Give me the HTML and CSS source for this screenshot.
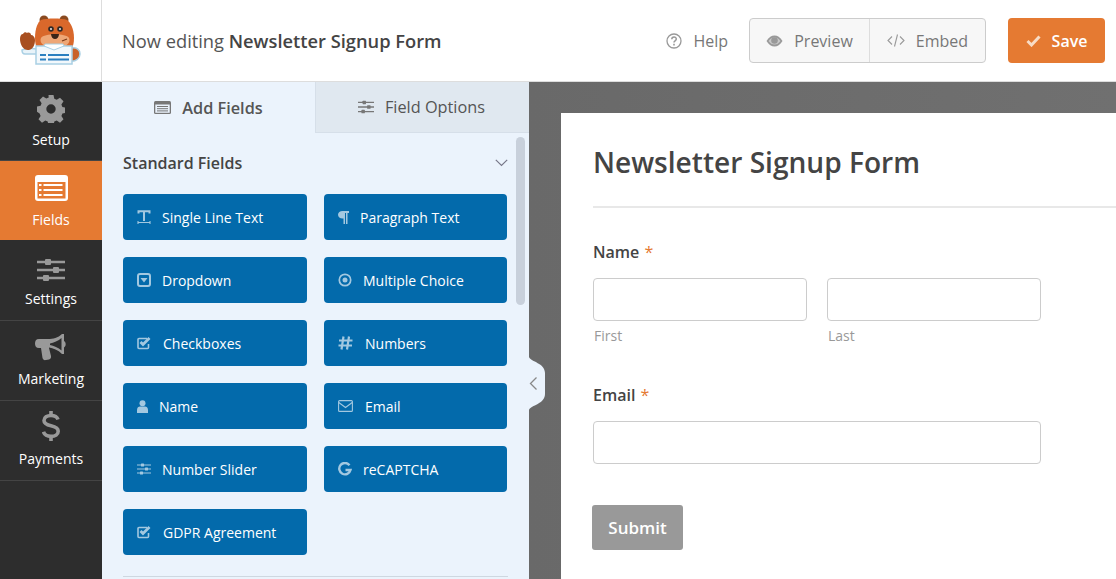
FILE: index.html
```html
<!DOCTYPE html>
<html lang="en">
<head>
    <meta charset="UTF-8">
    <meta name="viewport" content="width=device-width, initial-scale=1.0">
    <title>Newsletter Signup Form</title>
    <link rel="stylesheet" href="styles.css">
</head>
<body>
    <svg class="icon-defs" width="0" height="0">
        <symbol id="i-sliders" viewBox="0 0 28 24">
            <path d="M0 4h28M0 12h28M0 20h28" stroke="currentColor" stroke-width="2.4" fill="none"/>
            <rect x="8" y="1" width="6" height="6" rx="1" fill="currentColor"/>
            <rect x="16" y="9" width="6" height="6" rx="1" fill="currentColor"/>
            <rect x="6" y="17" width="6" height="6" rx="1" fill="currentColor"/>
        </symbol>
        <symbol id="i-check" viewBox="0 0 14 14">
            <path d="M11.500 8v3.500a1 1 0 0 1-1 1H2a1 1 0 0 1-1-1v-8a1 1 0 0 1 1-1h8" stroke="currentColor" stroke-width="1.600" fill="none"/>
            <path d="M3.500 6l2.500 2.500L12.500 2" stroke="currentColor" stroke-width="2.800" fill="none"/>
        </symbol>
    </svg>

    <header class="topbar">
        <div class="logo">
            <svg width="62" height="52" viewBox="0 0 62 52">
                <path d="M52 33c6-1 9 2 9 6s-4 8-10 7z" fill="#c9622a" stroke="#a9d0e4" stroke-width="1.500"/>
                <path d="M3 35c0 3 1 4 3 4h12v-5l-10-1z" fill="#e8f3f9" stroke="#a9d0e4" stroke-width="1.500"/>
                <path d="M1 24c0-3 1-5 3-5 1-2 3-2 4-1 2-1 4 0 4 2 2 0 4 2 4 5 0 5-2 9-6 10-5 1-9-5-9-11z" fill="#a84f20"/>
                <circle cx="25" cy="5" r="4.500" fill="#8a4a20"/>
                <circle cx="45" cy="5" r="4.500" fill="#8a4a20"/>
                <path d="M22 5c5-2 21-2 26 0 3 2 7 8 7 18 0 5-1 8-2 10H18c-1-2-2-5-2-10 0-10 3-16 6-18z" fill="#d9682b"/>
                <path d="M22 23c3-5 25-5 28 0 2 4-2 10-14 10s-16-6-14-10z" fill="#eea777"/>
                <circle cx="32" cy="14" r="2.800" fill="#2e2a28"/>
                <circle cx="41" cy="14" r="2.800" fill="#2e2a28"/>
                <circle cx="32" cy="14" r=".9" fill="#fff"/>
                <circle cx="41" cy="14" r=".9" fill="#fff"/>
                <path d="M32 19h8c0 3-2 5-4 5s-4-2-4-5z" fill="#3a2418"/>
                <path d="M43 26l5-2" stroke="#7a3a18" stroke-width="1.200"/>
                <path d="M17 31h36v18H17z" fill="#f2f8fc" stroke="#a9d0e4" stroke-width="1.500"/>
                <path d="M25 31l10 4 10-4-1-2H26z" fill="#fff" stroke="#a9d0e4"/>
                <path d="M21 40h6M29 40h21M21 44.500h6M29 44.500h21" stroke="#2a7fc0" stroke-width="2"/>
            </svg>
        </div>
        <div class="editing">Now editing <strong>Newsletter Signup Form</strong></div>
        <a class="help">
            <svg width="16" height="16" viewBox="0 0 16 16" fill="none" stroke="#999">
                <circle cx="8" cy="8" r="7" stroke-width="1.300"/>
                <path d="M5.800 6.300c0-3 4.500-3 4.500-.2 0 1.800-2.300 1.800-2.300 3.400" stroke-width="1.500"/>
                <path d="M8 10.700v1.800" stroke-width="1.600"/>
            </svg>
            Help
        </a>
        <div class="btn-group">
            <button class="group-btn">
                <svg width="17" height="12" viewBox="0 0 17 12">
                    <path d="M0.500 6C3 2 5.500 0.500 8.500 0.500S14 2 16.500 6C14 10 11.500 11.500 8.500 11.500S3 10 0.500 6z" fill="#999"/>
                    <path d="M2.500 6c1.800-2.500 3.500-3.500 6-3.500s4.200 1 6 3.500c-1.800 2.500-3.500 3.500-6 3.500s-4.200-1-6-3.500z" fill="#f7f7f7" opacity=".5"/>
                    <circle cx="8.500" cy="5.500" r="3.300" fill="#999"/>
                </svg>
                Preview
            </button>
            <button class="group-btn">
                <svg width="18" height="13" viewBox="0 0 18 13" fill="none" stroke="#999" stroke-width="1.100">
                    <path d="M5 2.500L1 6.500l4 4M13 2.500l4 4-4 4M10.500 0.500l-3 12"/>
                </svg>
                Embed
            </button>
        </div>
        <button class="save-btn">
            <svg width="15" height="12" viewBox="0 0 15 12" fill="none" stroke="#f8dcc6" stroke-width="3">
                <path d="M1.500 6l4 4 8-8.500"/>
            </svg>
            Save
        </button>
    </header>

    <div class="builder">
        <nav class="sidebar">
            <a class="nav-item">
                <svg width="28" height="28" viewBox="0 0 28 28">
                    <path fill="#999" fill-rule="evenodd" d="M11.500 0h5l.8 3.800 2.400 1 3.300-2.100 3.500 3.500-2.100 3.300 1 2.400 3.800.8v5l-3.800.8-1 2.400 2.100 3.300-3.500 3.500-3.300-2.100-2.400 1-.8 3.800h-5l-.8-3.800-2.400-1-3.300 2.100-3.500-3.500 2.100-3.300-1-2.400L-.2 16.500v-5l3.800-.8 1-2.400-2.100-3.300 3.500-3.500 3.300 2.100 2.400-1zM14 9.300a4.700 4.700 0 1 0 0 9.400 4.700 4.700 0 0 0 0-9.400z"/>
                </svg>
                <span>Setup</span>
            </a>
            <a class="nav-item active">
                <svg width="33" height="26" viewBox="0 0 33 26">
                    <rect x="0" y="0" width="33" height="26" rx="3" fill="#fff"/>
                    <rect x="2.500" y="7" width="28" height="16.500" fill="#e57a32"/>
                    <path d="M8.500 10h19M8.500 15h19M8.500 20h19M4 10h2.500M4 15h2.500M4 20h2.500" stroke="#fff" stroke-width="2.200"/>
                </svg>
                <span>Fields</span>
            </a>
            <a class="nav-item">
                <svg class="nav-sliders" width="28" height="24"><use href="#i-sliders"/></svg>
                <span>Settings</span>
            </a>
            <a class="nav-item">
                <svg width="32" height="28" viewBox="0 0 32 28">
                    <path fill="#999" d="M27 0h2v7c2 1 2.500 5-.000 6.500V20h-2c-4-4-9-6-13-6.500v.5l2 8c.3 2-.5 3-2 3.500l-3 .5c-2 .5-3-.5-3.500-2L6 14H4c-3 0-4-2-4-4.500S1 5 4 5h9c5 0 10-1 14-5zm-.5 4c-3 3-8 4.800-11.500 5.500v1.500c3.500.7 8.500 2.500 11.500 5.500z"/>
                </svg>
                <span>Marketing</span>
            </a>
            <a class="nav-item">
                <svg width="18" height="32" viewBox="0 0 18 32">
                    <path fill="none" stroke="#999" stroke-width="3.600" d="M16 9.500C15 6.500 12.500 5.500 9 5.500c-4 0-7 1.800-7 5s2.500 4.300 7 5.300 7.200 2.200 7.200 5.400-3 5.200-7.200 5.200c-3.800 0-6.500-1.300-7.500-4.500"/>
                    <path stroke="#999" stroke-width="3.600" d="M9 1v5M9 26v5"/>
                </svg>
                <span>Payments</span>
            </a>
        </nav>

        <section class="panel">
            <div class="tabs">
                <div class="tab tab-active">
                    <svg width="17" height="13" viewBox="0 0 17 13">
                        <rect width="17" height="13" rx="1.500" fill="#777"/>
                        <rect x="1.300" y="3.500" width="14.400" height="8.300" fill="#e9f1fb"/>
                        <path d="M3 5.500h11M3 7.700h11M3 9.900h11" stroke="#777"/>
                    </svg>
                    Add Fields
                </div>
                <div class="tab">
                    <svg class="tab-sliders" width="16" height="14"><use href="#i-sliders"/></svg>
                    Field Options
                </div>
            </div>
            <div class="panel-body">
                <div class="group-title">
                    Standard Fields
                    <svg width="13" height="8" viewBox="0 0 13 8" fill="none" stroke="#778">
                        <path d="M.8 .8l5.700 5.700L12.200 .8" stroke-width="1.200"/>
                    </svg>
                </div>
                <div class="field-grid">
                    <button class="field-btn">
                        <svg width="14" height="14" viewBox="0 0 14 14" fill="none" stroke="currentColor">
                            <path d="M1.500 3.500V1.200h11v2.300M7 1.200V11" stroke-width="2"/>
                            <path d="M1 12.500h12M1 11v3M13 11v3" stroke-width="1.100"/>
                        </svg>
                        Single Line Text
                    </button>
                    <button class="field-btn">
                        <svg width="11" height="13" viewBox="0 0 11 13" fill="currentColor">
                            <path d="M4.500 0H11v2H9.500v11H8V2H7v11H5.500V7.500h-1C2 7.500 0 6 0 3.800S2 0 4.500 0z"/>
                        </svg>
                        Paragraph Text
                    </button>
                    <button class="field-btn">
                        <svg width="14" height="14" viewBox="0 0 14 14">
                            <rect x="1" y="1" width="12" height="12" rx="2" fill="none" stroke="currentColor" stroke-width="2"/>
                            <path d="M3.500 5h7L7 9.500z" fill="currentColor"/>
                        </svg>
                        Dropdown
                    </button>
                    <button class="field-btn">
                        <svg width="14" height="14" viewBox="0 0 14 14">
                            <circle cx="7" cy="7" r="5.700" fill="none" stroke="currentColor" stroke-width="1.700"/>
                            <circle cx="7" cy="7" r="2.500" fill="currentColor"/>
                        </svg>
                        Multiple Choice
                    </button>
                    <button class="field-btn">
                        <svg class="wide-gap" width="14" height="14"><use href="#i-check"/></svg>
                        Checkboxes
                    </button>
                    <button class="field-btn">
                        <svg class="wide-gap" width="15" height="14" viewBox="0 0 15 14" fill="none" stroke="currentColor" stroke-width="2.200">
                            <path d="M5.500 .5L3.500 13.500M11 .5L9 13.500M1 4.500h13.500M.5 9.500h13.500"/>
                        </svg>
                        Numbers
                    </button>
                    <button class="field-btn">
                        <svg width="11" height="13" viewBox="0 0 11 13" fill="currentColor">
                            <circle cx="5.500" cy="3.200" r="3"/>
                            <path d="M0 13v-3c0-2.500 1.500-3.500 3-3.500h5c1.500 0 3 1 3 3.500v3z"/>
                        </svg>
                        Name
                    </button>
                    <button class="field-btn">
                        <svg class="wide-gap" width="15" height="12" viewBox="0 0 15 12" fill="none" stroke="currentColor" stroke-width="1.100">
                            <rect x=".6" y=".6" width="13.800" height="10.800" rx="1"/>
                            <path d="M.8 2.500l6.700 5 6.700-5"/>
                        </svg>
                        Email
                    </button>
                    <button class="field-btn">
                        <svg width="14" height="12"><use href="#i-sliders"/></svg>
                        Number Slider
                    </button>
                    <button class="field-btn">
                        <svg width="14" height="14" viewBox="0 0 14 14" fill="none" stroke="currentColor" stroke-width="2.400">
                            <path d="M11.500 3.200A5.700 5.700 0 1 0 12.500 8H7.500"/>
                        </svg>
                        reCAPTCHA
                    </button>
                    <button class="field-btn">
                        <svg class="wide-gap" width="14" height="14"><use href="#i-check"/></svg>
                        GDPR Agreement
                    </button>
                </div>
                <div class="group-rule"></div>
            </div>
            <div class="scrollbar"></div>
            <svg class="collapse-tab" width="16" height="53" viewBox="0 0 16 53">
                <path d="M0 0c2 5 16 6 16 16v21c0 10-14 11-16 16z" fill="#ebf3fc"/>
                <path d="M7.500 20.500L1.500 26.500l6 6" fill="none" stroke="#888" stroke-width="1.300"/>
            </svg>
        </section>

        <main class="preview">
            <div class="form-card">
                <h1>Newsletter Signup Form</h1>
                <div class="form-field">
                    <label class="field-label">Name <span class="req">*</span></label>
                    <div class="name-row">
                        <div>
                            <input class="text-input" type="text">
                            <div class="sublabel">First</div>
                        </div>
                        <div>
                            <input class="text-input" type="text">
                            <div class="sublabel">Last</div>
                        </div>
                    </div>
                </div>
                <div class="form-field">
                    <label class="field-label">Email <span class="req">*</span></label>
                    <input class="text-input email-input" type="text">
                </div>
                <button class="submit-btn">Submit</button>
            </div>
        </main>
    </div>
</body>
</html>
```

FILE: styles.css
```css
* {
    box-sizing: border-box;
}

html, body {
    height: 100%;
}

body {
    margin: 0;
    overflow: hidden;
    font-family: "Open Sans", "Noto Sans", sans-serif;
    color: #444;
    background: #fff;
}

.icon-defs {
    position: absolute;
}

button {
    font-family: inherit;
}

.topbar {
    height: 82px;
    display: flex;
    align-items: center;
    border-bottom: 1px solid #ddd;
}

.logo {
    width: 102px;
    height: 81px;
    flex-shrink: 0;
    padding: 15px 0 0 19px;
    border-right: 1px solid #ddd;
}

.editing {
    margin-left: 20px;
    font-size: 18.3px;
    color: #555;
}

.editing strong {
    font-weight: 600;
    color: #444;
}

.help {
    margin-left: auto;
    display: flex;
    align-items: center;
    gap: 11px;
    font-size: 16px;
    color: #777;
}

.btn-group {
    display: flex;
    margin-left: 21px;
    height: 45px;
    width: 237px;
    border: 1px solid #ccc;
    border-radius: 4px;
    background: #f7f7f7;
}

.group-btn {
    display: flex;
    align-items: center;
    justify-content: center;
    gap: 11px;
    border: none;
    background: none;
    padding: 0;
    font-size: 16px;
    color: #777;
}

.group-btn:first-child {
    width: 120px;
    border-right: 1px solid #ddd;
}

.group-btn:last-child {
    flex: 1;
}

.save-btn {
    display: flex;
    align-items: center;
    justify-content: center;
    gap: 11px;
    width: 97px;
    height: 45px;
    margin: 0 11px 0 22px;
    border: none;
    border-radius: 4px;
    background: #e57a32;
    color: #fff;
    font-size: 16px;
    font-weight: 600;
}

.builder {
    display: flex;
    height: calc(100% - 82px);
}

.sidebar {
    width: 102px;
    flex-shrink: 0;
    background: #2d2d2d;
}

.nav-item {
    height: 80px;
    display: flex;
    flex-direction: column;
    align-items: center;
    justify-content: flex-end;
    gap: 8px;
    padding-bottom: 12px;
    border-bottom: 1px solid #444;
    color: #fff;
    font-size: 14px;
    line-height: 18px;
}

.nav-item:nth-child(1) {
    height: 79px;
    padding-bottom: 11px;
    gap: 8px;
}

.nav-item.active {
    padding-bottom: 11px;
    gap: 10px;
    background: #e57a32;
    border-bottom-color: #2d2d2d;
}

.nav-sliders {
    color: #999;
}

.panel {
    position: relative;
    width: 427px;
    flex-shrink: 0;
    background: #ebf3fc;
}

.tabs {
    display: flex;
    height: 51px;
    border-bottom: 1px solid #d6dfe9;
}

.tab {
    display: flex;
    align-items: center;
    justify-content: center;
    gap: 11px;
    font-size: 16.3px;
    color: #555;
    background: #e0e8f0;
}

.tab:first-child {
    width: 214px;
}

.tab:last-child {
    flex: 1;
    padding-right: 2px;
}

.tab-active {
    background: #ebf3fc;
    font-weight: 600;
    margin-bottom: -1px;
    border-right: 1px solid #d6dfe9;
}

.tab-sliders {
    color: #777;
}

.panel-body {
    padding: 0 21px;
}

.group-title {
    display: flex;
    align-items: center;
    justify-content: space-between;
    height: 61px;
    padding-bottom: 2px;
    font-size: 16px;
    font-weight: 600;
    color: #444;
}

.field-grid {
    display: grid;
    grid-template-columns: 184px 183px;
    grid-auto-rows: 46px;
    column-gap: 17px;
    row-gap: 17px;
}

.field-btn {
    display: flex;
    align-items: center;
    gap: 11px;
    padding: 0 0 0 14px;
    border: none;
    border-radius: 4px;
    background: #036aab;
    color: #fff;
    font-size: 14px;
    text-align: left;
}

.field-btn svg {
    color: #a3c8e0;
    flex-shrink: 0;
}

.field-btn .wide-gap {
    margin-right: 1px;
}

.group-rule {
    margin-top: 21px;
    border-top: 1px solid #ced7e0;
}

.scrollbar {
    position: absolute;
    top: 55px;
    left: 414px;
    width: 9px;
    height: 168px;
    border-radius: 5px;
    background: #c8d0db;
}

.collapse-tab {
    position: absolute;
    top: 275px;
    right: -16px;
}

.preview {
    flex: 1;
    padding: 31px 0 0 32px;
    overflow: hidden;
    background: linear-gradient(90deg, #696969 0%, #707070 100%);
}

.form-card {
    width: 640px;
    height: 500px;
    padding: 31px 32px 0;
    background: #fff;
}

.form-card h1 {
    margin: 0 0 33px;
    padding-bottom: 26px;
    width: 590px;
    border-bottom: 2px solid #e8e8e8;
    font-size: 28.1px;
    line-height: 36px;
    font-weight: 600;
    color: #444;
}

.form-field {
    margin-bottom: 39px;
}

.field-label {
    display: block;
    margin-bottom: 15px;
    font-size: 16px;
    line-height: 22px;
    font-weight: 600;
    color: #444;
}

.req {
    margin-left: 1px;
    color: #e57a32;
    font-weight: 400;
}

.name-row {
    display: flex;
    gap: 20px;
}

.text-input {
    display: block;
    width: 214px;
    height: 43px;
    border: 1px solid #ccc;
    border-radius: 4px;
    background: #fff;
}

.email-input {
    width: 448px;
}

.sublabel {
    margin-top: 5px;
    padding-left: 1px;
    font-size: 14px;
    line-height: 19px;
    color: #999;
}

.submit-btn {
    display: block;
    width: 91px;
    height: 45px;
    margin: 41px 0 0 -1px;
    border: none;
    border-radius: 3px;
    background: #999;
    color: #fff;
    font-size: 17px;
    font-weight: 600;
}
```
